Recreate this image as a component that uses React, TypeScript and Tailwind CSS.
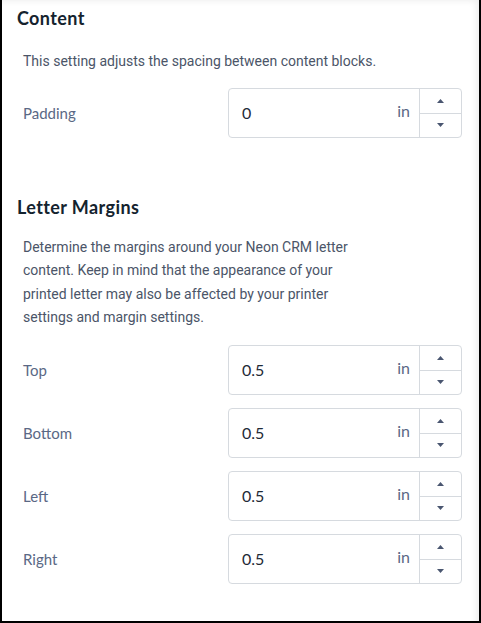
import React from "react";

type Field = { label: string; value: string };

const MARGINS: Field[] = [
  { label: "Top", value: "0.5" },
  { label: "Bottom", value: "0.5" },
  { label: "Left", value: "0.5" },
  { label: "Right", value: "0.5" },
];

function UnitInput({ label, value }: Field) {
  return (
    <div className="flex h-[50px] items-center">
      <div className="w-[211px] pl-[6px] text-[15px] text-[#5a6885] [font-family:Lato,sans-serif]">{label}</div>
      <div className="flex h-[50px] w-[234px] rounded-[4px] border border-[#d6dadf] bg-white">
        <div className="flex flex-1 items-center pl-[13px] text-[16px] text-[#1f2a37] [font-family:Lato,sans-serif]">
          {value}
        </div>
        <div className="flex items-center pr-[9px] pb-[5px] text-[16px] text-[#5a6885] [font-family:Lato,sans-serif]">
          in
        </div>
        <div className="flex w-[42px] flex-col border-l border-[#d6dadf]">
          <button type="button" className="flex flex-1 items-center justify-center border-b border-[#d6dadf]">
            <svg width="7" height="4" viewBox="0 0 7 4">
              <path d="M0 4L3.5 0L7 4Z" fill="#4a5670" />
            </svg>
          </button>
          <button type="button" className="flex flex-1 items-center justify-center">
            <svg width="7" height="4" viewBox="0 0 7 4">
              <path d="M0 0L3.5 4L7 0Z" fill="#4a5670" />
            </svg>
          </button>
        </div>
      </div>
    </div>
  );
}

export default function App() {
  return (
    <div className="h-screen w-screen overflow-hidden border-x-2 border-b-2 border-black bg-white">
      <div className="h-full pl-[15px] shadow-[inset_-7px_5px_6px_-4px_rgba(0,0,0,0.07)]">
        <h2 className="pt-[6px] h-[30px] text-[18px] leading-[24px] font-bold tracking-[0.4px] text-[#14232e] [font-family:Lato,sans-serif]">
          Content
        </h2>
        <p className="mt-[20px] pl-[6px] text-[14px] leading-[22px] text-[#4b5568] [font-family:Roboto,sans-serif]">
          This setting adjusts the spacing between content blocks.
        </p>
        <div className="mt-[16px]">
          <UnitInput label="Padding" value="0" />
        </div>

        <h2 className="mt-[57px] h-[24px] text-[18px] leading-[24px] font-bold tracking-[0.4px] text-[#14232e] [font-family:Lato,sans-serif]">
          Letter Margins
        </h2>
        <p className="mt-[17px] w-[354px] pl-[6px] text-[14px] leading-[23.3px] text-[#4b5568] [font-family:Roboto,sans-serif]">
          Determine the margins around your Neon CRM letter content. Keep in mind that the appearance of your
          printed letter may also be affected by your printer settings and margin settings.
        </p>
        <div className="mt-[16px] flex flex-col gap-[13px]">
          {MARGINS.map((f) => (
            <UnitInput key={f.label} label={f.label} value={f.value} />
          ))}
        </div>
      </div>
    </div>
  );
}
